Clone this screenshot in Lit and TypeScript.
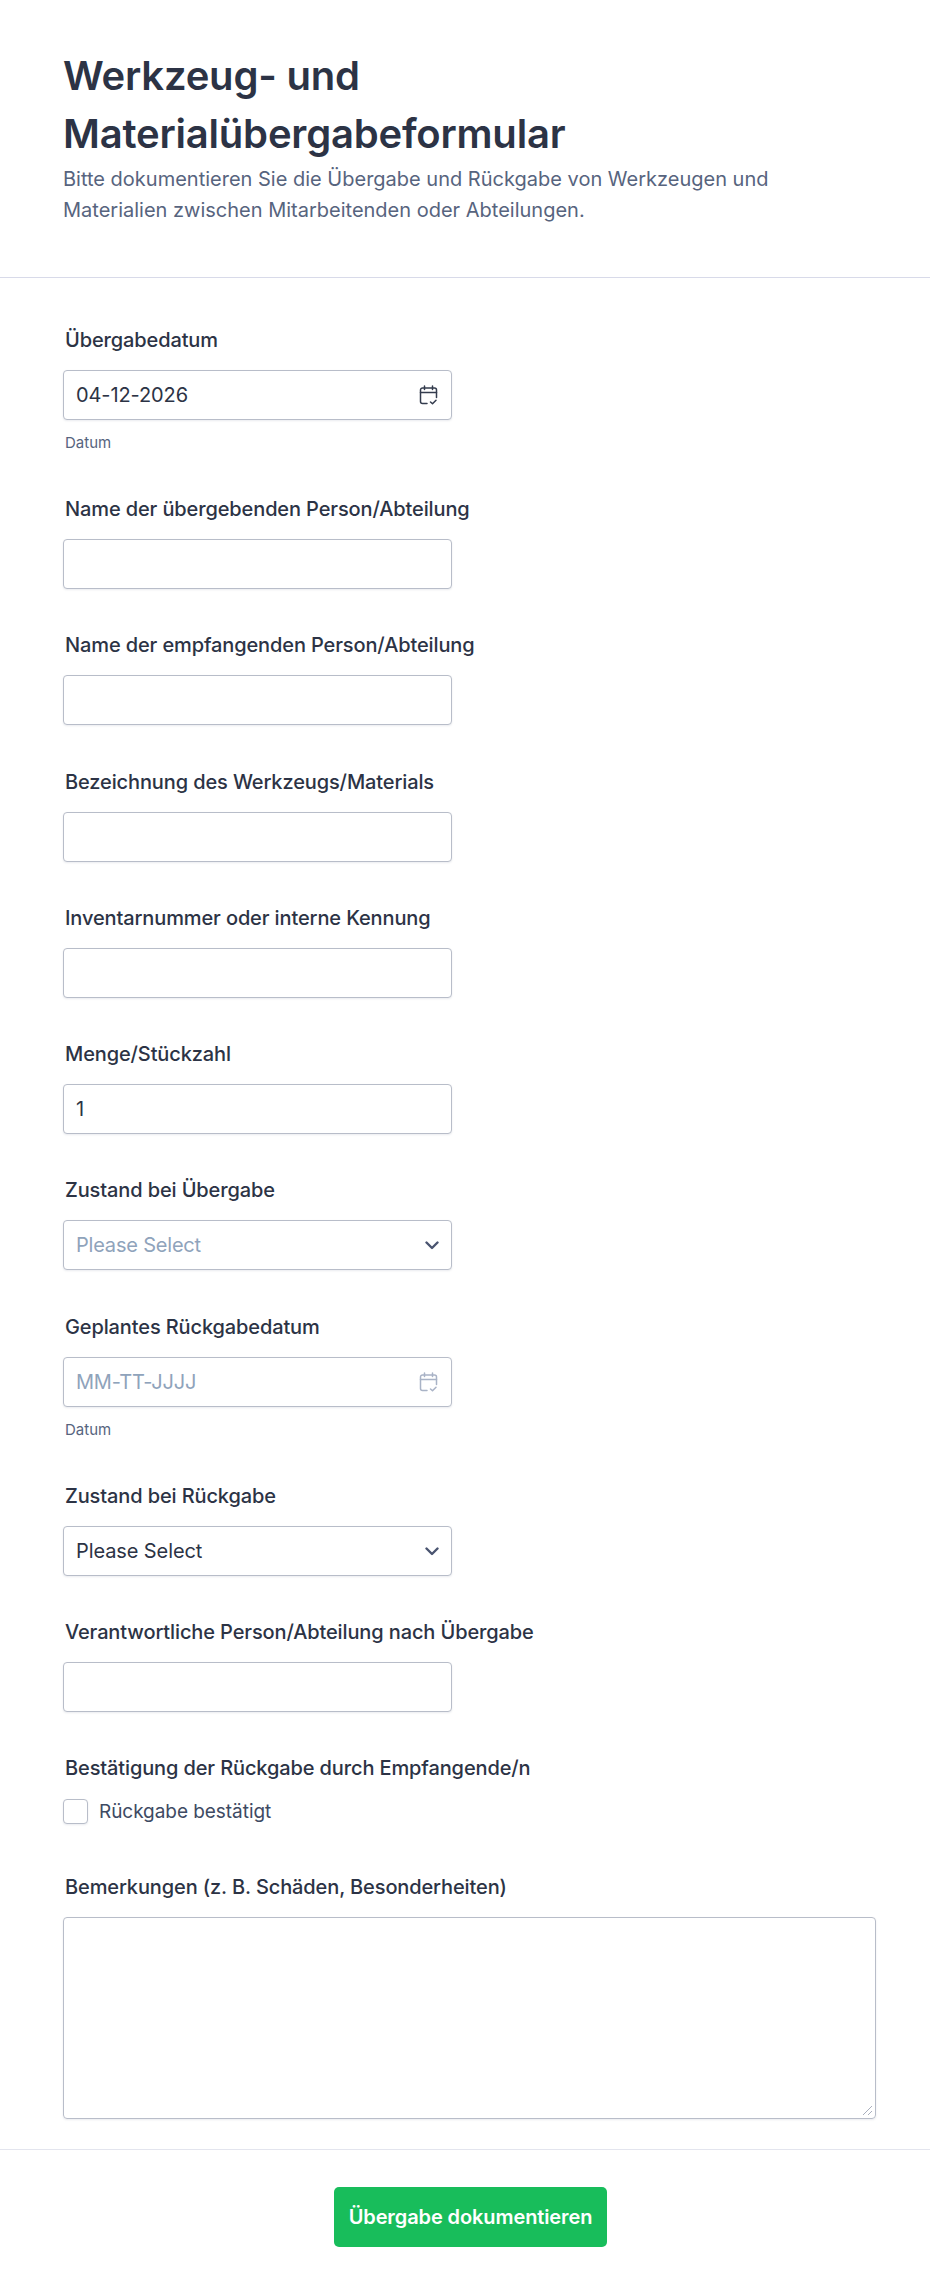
import { LitElement, html, css, svg } from "lit";
import { customElement } from "lit/decorators.js";

const calendar = (cls: string) => html`<svg class="cal ${cls}" width="20" height="20" viewBox="0 0 20 20" fill="none" stroke="currentColor" stroke-width="1.5" stroke-linecap="round" stroke-linejoin="round">
  ${svg`<path d="M9 18.5H4.5a2 2 0 0 1-2-2V5a2 2 0 0 1 2-2h12a2 2 0 0 1 2 2v7.5"/><path d="M2.5 7.5h16"/><path d="M6.500 1v3.500M14.500 1v3.500"/><path d="M12.500 17l2 1.800 3.500-3.600"/>`}
</svg>`;

const chevron = html`<svg class="chev" width="14" height="14" viewBox="0 0 14 14" fill="none" stroke="currentColor" stroke-width="2.4" stroke-linecap="round" stroke-linejoin="round"><path d="M1.5 4.5L7 10l5.500-5.500"/></svg>`;

@customElement("app-root")
export class AppRoot extends LitElement {
  static styles = css`
    :host { display: block; width: 930px; height: 2295px; background: #fff; font-family: Inter, "Liberation Sans", sans-serif; color: #2c3345; overflow: hidden; }
    * { box-sizing: border-box; }
    .head { height: 278px; padding: 47px 63px 0; border-bottom: 1px solid #d8dae9; }
    h1 { margin: 0 0 1px; font-size: 40px; line-height: 58px; font-weight: 600; letter-spacing: -0.2px; color: #2c3345; width: 760px; }
    .sub { margin: 0; font-size: 20px; line-height: 31px; color: #57647e; width: 760px; font-weight: 400; }
    .form { padding: 50px 48px 0 63px; height: 1872px; border-bottom: 1px solid #e3e5ee; }
    .field { margin-bottom: 44.3px; }
    .field.hint { margin-bottom: 45px; }
    .field.chk { margin-bottom: 51px; }
    label.l { display: block; margin: 0 0 18px 2px; font-size: 20px; line-height: 24px; font-weight: 500; letter-spacing: -0.12px; color: #2c3345; }
    .box { width: 389px; height: 50px; border: 1px solid #b8bdc9; border-radius: 4px; box-shadow: 0 1px 2px rgba(80,90,120,.12); display: flex; align-items: center; padding: 0 13px; font-size: 20px; letter-spacing: -0.1px; color: #2c3345; background: #fff; }
    .txt { margin-left: -1px; }
    .ph { color: #8fa3bb; margin-left: -1px; letter-spacing: -0.2px; }
    .cal { margin-left: auto; color: #343c4e; }
    .cal.dim { color: #a9b3c6; }
    .chev { margin-left: auto; margin-right: -1px; color: #4a5470; }
    .small { margin: 14px 0 0 2px; font-size: 15px; line-height: 18px; color: #57647e; }
    .check { display: flex; align-items: center; gap: 11px; font-size: 19px; letter-spacing: -0.05px; color: #3e4a63; height: 26px; }
    .cb { width: 25px; height: 25px; border: 1px solid #b8bdc9; border-radius: 4px; box-shadow: 0 1px 2px rgba(80,90,120,.12); background: #fff; }
    .area { position: relative; width: 813px; height: 202px; border: 1px solid #b8bdc9; border-radius: 4px; box-shadow: 0 1px 2px rgba(80,90,120,.12); }
    .grip { position: absolute; right: 2px; bottom: 2px; }
    .foot { display: flex; justify-content: center; padding: 37px 0 0; }
    .btn { display: flex; align-items: center; justify-content: center; width: 273px; height: 60px; border-radius: 5px; background: #18bd5b; color: #fff; font-size: 20px; font-weight: 600; letter-spacing: -0.1px; margin-left: 11px; }
  `;

  private text(label: string) {
    return html`<div class="field"><label class="l">${label}</label><div class="box"></div></div>`;
  }

  render() {
    return html`
      <header class="head">
        <h1>Werkzeug- und Materialübergabeformular</h1>
        <p class="sub">Bitte dokumentieren Sie die Übergabe und Rückgabe von Werkzeugen und Materialien zwischen Mitarbeitenden oder Abteilungen.</p>
      </header>
      <section class="form">
        <div class="field hint"><label class="l">Übergabedatum</label><div class="box"><span class="txt">04-12-2026</span>${calendar("")}</div><div class="small">Datum</div></div>
        ${this.text("Name der übergebenden Person/Abteilung")}
        ${this.text("Name der empfangenden Person/Abteilung")}
        ${this.text("Bezeichnung des Werkzeugs/Materials")}
        ${this.text("Inventarnummer oder interne Kennung")}
        <div class="field"><label class="l">Menge/Stückzahl</label><div class="box"><span class="txt">1</span></div></div>
        <div class="field"><label class="l">Zustand bei Übergabe</label><div class="box"><span class="ph">Please Select</span>${chevron}</div></div>
        <div class="field hint"><label class="l">Geplantes Rückgabedatum</label><div class="box"><span class="ph">MM-TT-JJJJ</span>${calendar("dim")}</div><div class="small">Datum</div></div>
        <div class="field"><label class="l">Zustand bei Rückgabe</label><div class="box"><span class="txt">Please Select</span>${chevron}</div></div>
        ${this.text("Verantwortliche Person/Abteilung nach Übergabe")}
        <div class="field chk"><label class="l">Bestätigung der Rückgabe durch Empfangende/n</label><div class="check"><span class="cb"></span>Rückgabe bestätigt</div></div>
        <div class="field"><label class="l">Bemerkungen (z. B. Schäden, Besonderheiten)</label><div class="area">
          <svg class="grip" width="11" height="11" viewBox="0 0 11 11" stroke="#a9afbd" stroke-width="1"><path d="M1 10L10 1M6 10l4-4"/></svg>
        </div></div>
      </section>
      <div class="foot"><div class="btn">Übergabe dokumentieren</div></div>
    `;
  }
}
